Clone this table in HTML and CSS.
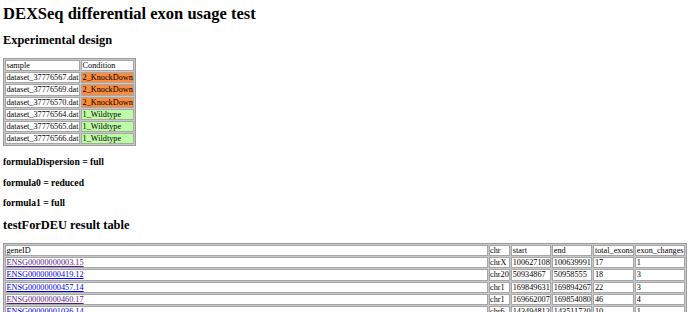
FILE: index.html
```html
<!DOCTYPE html>
<html>
<head>
<meta charset="utf-8">
<title>DEXSeq differential exon usage test</title>
<link rel="stylesheet" href="styles.css">
</head>
<body>
<h1 class="title">DEXSeq differential exon usage test</h1>
<h2 class="section">Experimental design</h2>
<table class="grid design">
<tr><td>sample</td><td>Condition</td></tr>
<tr><td>dataset_37776567.dat</td><td class="kd">2_KnockDown</td></tr>
<tr><td>dataset_37776569.dat</td><td class="kd">2_KnockDown</td></tr>
<tr><td>dataset_37776570.dat</td><td class="kd">2_KnockDown</td></tr>
<tr><td>dataset_37776564.dat</td><td class="wt">1_Wildtype</td></tr>
<tr><td>dataset_37776565.dat</td><td class="wt">1_Wildtype</td></tr>
<tr><td>dataset_37776566.dat</td><td class="wt">1_Wildtype</td></tr>
</table>
<h3 class="formula">formulaDispersion = full</h3>
<h3 class="formula">formula0 = reduced</h3>
<h3 class="formula">formula1 = full</h3>
<h2 class="section">testForDEU result table</h2>
<table class="grid result">
<tr><td class="gene">geneID</td><td>chr</td><td>start</td><td>end</td><td>total_exons</td><td>exon_changes</td></tr>
<tr><td class="gene"><a class="seen" href="#">ENSG00000000003.15</a></td><td>chrX</td><td>100627108</td><td>100639991</td><td>17</td><td>1</td></tr>
<tr><td class="gene"><a href="#">ENSG00000000419.12</a></td><td>chr20</td><td>50934867</td><td>50958555</td><td>18</td><td>3</td></tr>
<tr><td class="gene"><a href="#">ENSG00000000457.14</a></td><td>chr1</td><td>169849631</td><td>169894267</td><td>22</td><td>3</td></tr>
<tr><td class="gene"><a class="seen" href="#">ENSG00000000460.17</a></td><td>chr1</td><td>169662007</td><td>169854080</td><td>46</td><td>4</td></tr>
<tr><td class="gene"><a href="#">ENSG00000001036.14</a></td><td>chr6</td><td>143494812</td><td>143511720</td><td>10</td><td>1</td></tr>
</table>
</body>
</html>
```
FILE: styles.css
```css
html, body {
  background: #ffffff;
}
body {
  margin: 4px 3px;
  font-family: "Liberation Serif", "Times New Roman", serif;
  color: #000;
  font-size: 8.24px;
}
.title {
  font-size: 16.5px;
  line-height: 19px;
  font-weight: bold;
  margin: 0 0 9.5px 0;
}
.section {
  font-size: 12.4px;
  line-height: 14.3px;
  font-weight: bold;
  margin: 10.3px 0;
}
.formula {
  font-size: 9.6px;
  line-height: 11px;
  font-weight: bold;
  margin: 9.6px 0;
}
.grid {
  border-collapse: separate;
  border-spacing: 1px;
  border: 1px solid #9c9c9c;
  background: #c9c9c9;
  font-size: 8.24px;
}
.grid td {
  border: 1px solid #a6a6a6;
  background: #ffffff;
  padding: 0 0.5px;
  line-height: 9.2px;
  white-space: nowrap;
}
.grid td.kd { background: #fb8b3d; }
.grid td.wt { background: #bdfca4; }
.result {
  width: 100%;
}
.result td.gene {
  width: 100%;
}
.result a {
  color: #0000ee;
}
.result a.seen {
  color: #551a8b;
}
```
